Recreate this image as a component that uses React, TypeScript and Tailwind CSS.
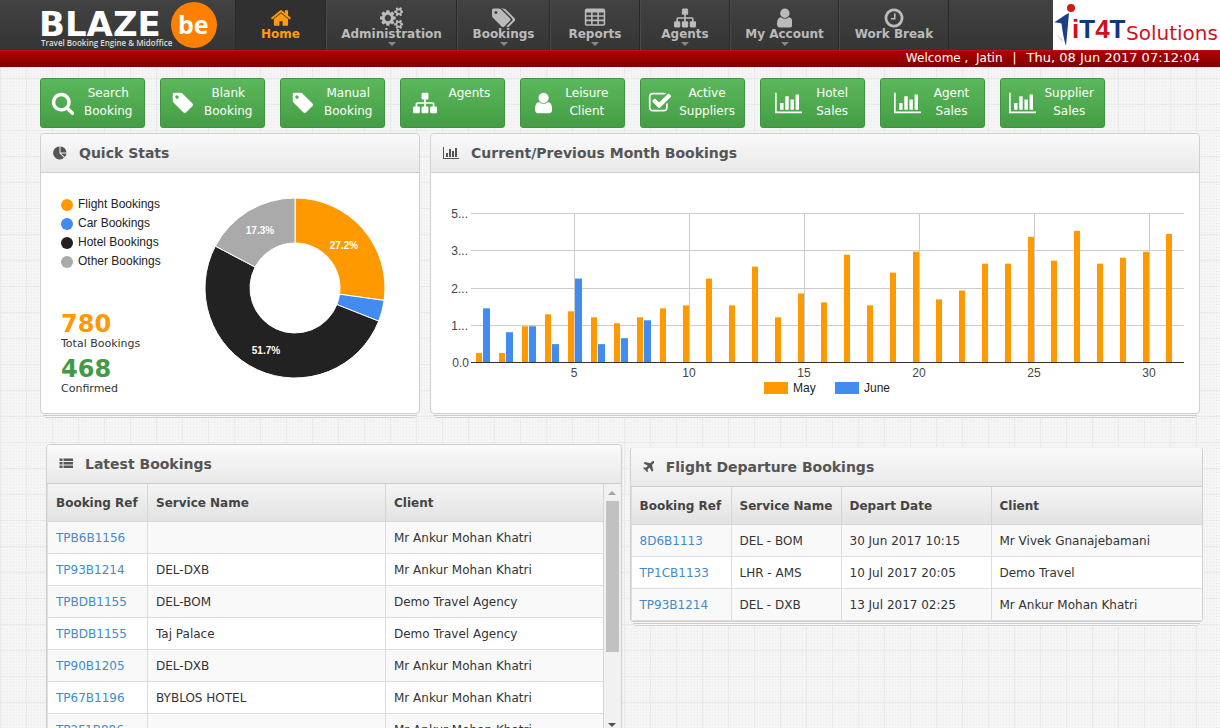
import { type ReactNode } from "react";

const PATHS = {
  home: "M1472 992v480q0 26-19 45t-45 19h-384v-384h-256v384h-384q-26 0-45-19t-19-45v-480q0-1 .5-3t.5-3l575-474 575 474q1 2 1 6zm223-69l-62 74q-8 9-21 11h-3q-13 0-21-7l-692-577-692 577q-12 8-24 7-13-2-21-11l-62-74q-8-10-7-23.5t11-21.5l719-599q32-26 76-26t76 26l244 204v-195q0-14 9-23t23-9h192q14 0 23 9t9 23v408l219 182q10 8 11 21.5t-7 23.5z",
  cogs: "M896 896q0-106-75-181t-181-75-181 75-75 181 75 181 181 75 181-75 75-181zm768 512q0-52-38-90t-90-38-90 38-38 90q0 53 37.5 90.5t90.5 37.5 90.5-37.5 37.5-90.5zm0-1024q0-52-38-90t-90-38-90 38-38 90q0 53 37.5 90.5t90.5 37.5 90.5-37.5 37.5-90.5zm-384 421v185q0 10-7 19.5t-16 10.5l-155 24q-11 35-32 76 34 48 90 115 7 11 7 20 0 12-7 19-23 30-82.5 89.5t-78.5 59.5q-11 0-21-7l-115-90q-37 19-77 31-11 108-23 155-7 24-30 24h-186q-11 0-20-7.5t-10-17.5l-23-153q-34-10-75-31l-118 89q-7 7-20 7-11 0-21-8-144-133-144-160 0-9 7-19 10-14 41-53t47-61q-23-44-35-82l-152-24q-10-1-17-9.5t-7-19.5v-185q0-10 7-19.5t16-10.5l155-24q11-35 32-76-34-48-90-115-7-11-7-20 0-12 7-20 22-30 82-89t79-59q11 0 21 7l115 90q34-18 77-32 11-108 23-154 7-24 30-24h186q11 0 20 7.5t10 17.5l23 153q34 10 75 31l118-89q8-7 20-7 11 0 21 8 144 133 144 160 0 8-7 19-12 16-42 54t-45 60q23 48 34 82l152 23q10 2 17 10.5t7 19.5zm640 533v140q0 16-149 31-12 27-30 52 51 113 51 138 0 4-4 7-122 71-124 71-8 0-46-47t-52-68q-20 2-30 2t-30-2q-14 21-52 68t-46 47q-2 0-124-71-4-3-4-7 0-25 51-138-18-25-30-52-149-15-149-31v-140q0-16 149-31 13-29 30-52-51-113-51-138 0-4 4-7 4-2 35-20t59-34 30-16q8 0 46 46.5t52 67.5q20-2 30-2t30 2q51-71 92-112l6-2q4 0 124 70 4 3 4 7 0 25-51 138 17 23 30 52 149 15 149 31zm0-1024v140q0 16-149 31-12 27-30 52 51 113 51 138 0 4-4 7-122 71-124 71-8 0-46-47t-52-68q-20 2-30 2t-30-2q-14 21-52 68t-46 47q-2 0-124-71-4-3-4-7 0-25 51-138-18-25-30-52-149-15-149-31v-140q0-16 149-31 13-29 30-52-51-113-51-138 0-4 4-7 4-2 35-20t59-34 30-16q8 0 46 46.5t52 67.5q20-2 30-2t30 2q51-71 92-112l6-2q4 0 124 70 4 3 4 7 0 25-51 138 17 23 30 52 149 15 149 31z",
  tag: "M576 448q0-53-37.5-90.5t-90.5-37.5-90.5 37.5-37.5 90.5 37.5 90.5 90.5 37.5 90.5-37.5 37.5-90.5zm1067 576q0 53-37 90l-491 492q-39 37-91 37-53 0-90-37l-715-716q-38-37-64.5-101t-26.5-117v-416q0-52 38-90t90-38h416q53 0 117 26.5t102 64.5l715 714q37 39 37 91z",
  tags: "M448 448q0-53-37.5-90.5t-90.5-37.5-90.5 37.5-37.5 90.5 37.5 90.5 90.5 37.5 90.5-37.5 37.5-90.5zm1067 576q0 53-37 90l-491 492q-39 37-91 37-53 0-90-37l-715-716q-38-37-64.5-101t-26.5-117v-416q0-52 38-90t90-38h416q53 0 117 26.5t102 64.5l715 714q37 39 37 91zm384 0q0 53-37 90l-491 492q-39 37-91 37-36 0-59-14t-53-45l470-470q37-37 37-90 0-52-37-91l-715-714q-38-38-102-64.5t-117-26.5h224q53 0 117 26.5t102 64.5l715 714q37 39 37 91z",
  sitemap: "M1792 1248v320q0 40-28 68t-68 28h-320q-40 0-68-28t-28-68v-320q0-40 28-68t68-28h96v-192h-512v192h96q40 0 68 28t28 68v320q0 40-28 68t-68 28h-320q-40 0-68-28t-28-68v-320q0-40 28-68t68-28h96v-192h-512v192h96q40 0 68 28t28 68v320q0 40-28 68t-68 28h-320q-40 0-68-28t-28-68v-320q0-40 28-68t68-28h96v-192q0-52 38-90t90-38h512v-192h-96q-40 0-68-28t-28-68v-320q0-40 28-68t68-28h320q40 0 68 28t28 68v320q0 40-28 68t-68 28h-96v192h512q52 0 90 38t38 90v192h96q40 0 68 28t28 68z",
  user: "M1536 1399q0 109-62.5 187t-150.5 78h-854q-88 0-150.5-78t-62.5-187q0-85 8.5-160.5t31.5-152 58.5-131 94-89 134.5-34.5q131 128 313 128t313-128q76 0 134.5 34.5t94 89 58.5 131 31.5 152 8.5 160.5zm-256-887q0 159-112.5 271.5t-271.5 112.5-271.5-112.5-112.5-271.5 112.5-271.5 271.5-112.5 271.5 112.5 112.5 271.5z",
  clock: "M1024 544v448q0 14-9 23t-23 9h-320q-14 0-23-9t-9-23v-64q0-14 9-23t23-9h224v-352q0-14 9-23t23-9h64q14 0 23 9t9 23zm416 352q0-148-73-273t-198-198-273-73-273 73-198 198-73 273 73 273 198 198 273 73 273-73 198-198 73-273zm224 0q0 209-103 385.5t-279.5 279.5-385.5 103-385.5-103-279.5-279.5-103-385.5 103-385.5 279.5-279.5 385.5-103 385.5 103 279.5 279.5 103 385.5z",
  table: "M224 128h1344q66 0 113 47t47 113v1088q0 66-47 113t-113 47h-1344q-66 0-113-47t-47-113v-1088q0-66 47-113t113-47zm-32 320v224h384v-224zm512 0v224h384v-224zm512 0v224h384v-224zm-1024 352v224h384v-224zm512 0v224h384v-224zm512 0v224h384v-224zm-1024 352v256h384v-256zm512 0v256h384v-256zm512 0v256h384v-256z",
  search: "M1216 832q0-185-131.5-316.5t-316.5-131.5-316.5 131.5-131.5 316.5 131.5 316.5 316.5 131.5 316.5-131.5 131.5-316.5zm512 832q0 52-38 90t-90 38q-54 0-90-38l-343-342q-179 124-399 124-143 0-273.5-55.5t-225-150-150-225-55.5-273.5 55.5-273.5 150-225 225-150 273.5-55.5 273.5 55.5 225 150 150 225 55.5 273.5q0 220-124 399l343 343q37 37 37 90z",
  check: "M1472 930v318q0 119-84.5 203.5t-203.5 84.5h-832q-119 0-203.5-84.5t-84.5-203.5v-832q0-119 84.5-203.5t203.5-84.5h832q63 0 117 25 15 7 18 23 3 17-9 29l-49 49q-10 10-23 10-3 0-9-2-23-6-45-6h-832q-66 0-113 47t-47 113v832q0 66 47 113t113 47h832q66 0 113-47t47-113v-254q0-13 9-22l64-64q10-10 23-10 6 0 12 3 20 8 20 29zm231-489l-814 814q-24 24-57 24t-57-24l-430-430q-24-24-24-57t24-57l110-110q24-24 57-24t57 24l263 263 647-647q24-24 57-24t57 24l110 110q24 24 24 57t-24 57z",
  chart: "M640 896v512h-256v-512h256zm384-512v1024h-256v-1024h256zm1024 1152v128h-2048v-1536h128v1408h1920zm-640-896v768h-256v-768h256zm384-384v1152h-256v-1152h256z",
  list: "M64 192h384v320h-384zm512 0h1216v320h-1216zm-512 448h384v320h-384zm512 0h1216v320h-1216zm-512 448h384v320h-384zm512 0h1216v320h-1216z",
  plane: "M1568 160q44 52 12 148t-108 172l-161 161 160 696q5 19-12 33l-128 96q-7 6-19 6-4 0-7-1-15-3-21-14l-279-508-259 259 53 194q5 17-8 31l-96 96q-9 9-23 9h-2q-15-2-24-13l-189-252-252-189q-11-7-13-23-1-13 9-25l96-97q9-9 23-9 6 0 8 1l194 53 259-259-508-279q-14-8-17-24-2-16 9-27l128-128q14-13 30-8l665 159 160-160q76-76 172-108t148 12z",
  pie: "M830 60A830 830 0 1 0 1400 1510L830 930ZM960 60A830 830 0 0 1 1730 830H960ZM1730 960A830 830 0 0 1 1500 1420L1040 960Z",
};

type IconName = keyof typeof PATHS;

// glyphs that are wider or narrower than the usual square
const BOXES: Partial<Record<IconName, string>> = {
  cogs: "0 0 1920 1792",
  tags: "0 0 1920 1792",
  chart: "0 0 2048 1792",
  user: "256 0 1280 1792",
  plane: "160 0 1440 1792",
};

function Icon({ name, className }: { name: IconName; className: string }) {
  return (
    <svg
      viewBox={BOXES[name] ?? "0 0 1792 1792"}
      className={`w-auto shrink-0 fill-current ${className}`}
      aria-hidden="true"
    >
      <path fillRule="evenodd" d={PATHS[name]} />
    </svg>
  );
}

const nav: { label: string; icon: IconName; width: string; menu?: boolean }[] = [
  { label: "Home", icon: "home", width: "w-[90px]" },
  { label: "Administration", icon: "cogs", width: "w-[131px]", menu: true },
  { label: "Bookings", icon: "tags", width: "w-[93px]", menu: true },
  { label: "Reports", icon: "table", width: "w-[90px]", menu: true },
  { label: "Agents", icon: "sitemap", width: "w-[90px]", menu: true },
  { label: "My Account", icon: "user", width: "w-[109px]", menu: true },
  { label: "Work Break", icon: "clock", width: "w-[110px]" },
];

const actions: { lines: string[]; icon: IconName }[] = [
  { lines: ["Search", "Booking"], icon: "search" },
  { lines: ["Blank", "Booking"], icon: "tag" },
  { lines: ["Manual", "Booking"], icon: "tag" },
  { lines: ["Agents"], icon: "sitemap" },
  { lines: ["Leisure", "Client"], icon: "user" },
  { lines: ["Active", "Suppliers"], icon: "check" },
  { lines: ["Hotel", "Sales"], icon: "chart" },
  { lines: ["Agent", "Sales"], icon: "chart" },
  { lines: ["Supplier", "Sales"], icon: "chart" },
];

const slices = [
  { label: "Flight Bookings", value: 27.2, color: "#ff9900", dot: "bg-[#ff9900]" },
  { label: "Car Bookings", value: 3.8, color: "#428bf1", dot: "bg-[#428bf1]" },
  { label: "Hotel Bookings", value: 51.7, color: "#222222", dot: "bg-[#222222]" },
  { label: "Other Bookings", value: 17.3, color: "#aaaaaa", dot: "bg-[#aaaaaa]" },
];

const may = [
  3, 3, 12, 16, 17, 15, 13, 15, 18, 19, 28, 19, 32, 15, 23, 20, 36, 19, 30, 37,
  21, 24, 33, 33, 42, 34, 44, 33, 35, 37, 43,
];
const june = [18, 10, 12, 6, 28, 6, 8, 14];

const latest = [
  ["TPB6B1156", "", "Mr Ankur Mohan Khatri"],
  ["TP93B1214", "DEL-DXB", "Mr Ankur Mohan Khatri"],
  ["TPBDB1155", "DEL-BOM", "Demo Travel Agency"],
  ["TPBDB1155", "Taj Palace", "Demo Travel Agency"],
  ["TP90B1205", "DEL-DXB", "Mr Ankur Mohan Khatri"],
  ["TP67B1196", "BYBLOS HOTEL", "Mr Ankur Mohan Khatri"],
  ["TP2F1B886", "", "Mr Ankur Mohan Khatri"],
];

const departures = [
  ["8D6B1113", "DEL - BOM", "30 Jun 2017 10:15", "Mr Vivek Gnanajebamani"],
  ["TP1CB1133", "LHR - AMS", "10 Jul 2017 20:05", "Demo Travel"],
  ["TP93B1214", "DEL - DXB", "13 Jul 2017 02:25", "Mr Ankur Mohan Khatri"],
];

function BlazeLogo() {
  return (
    <svg viewBox="0 0 180 50" className="h-[50px] w-[180px]" role="img" aria-label="Blaze be">
      <text x="-1" y="36" fill="#fff" className="font-['DejaVu_Sans'] text-[34px] font-bold">
        BLAZE
      </text>
      <text x="1" y="46" fill="#ddd" className="font-['Open_Sans'] text-[8px] font-semibold">
        Travel Booking Engine &amp; Midoffice
      </text>
      <circle cx="154" cy="25" r="23" fill="#ff8000" />
      <text x="138" y="34" fill="#fff" className="font-['Open_Sans'] text-[25px] font-bold">
        be
      </text>
    </svg>
  );
}

function PartnerLogo() {
  return (
    <svg viewBox="0 0 167 50" className="h-[50px] w-[167px] bg-white" role="img" aria-label="iT4T Solutions">
      <path d="M1 22.500C6 19 11 15.500 16 13L13 46C11 40 9.500 32 8.500 23.500C6 22.500 3 22.500 1 22.500Z" fill="#1c3f86" />
      <path d="M2 34L10 42L9 39Z" fill="#ccc" />
      <circle cx="18" cy="8" r="4" fill="#d01818" />
      <text x="19" y="38" fill="#14367c" className="font-['Liberation_Sans'] text-[26px] font-bold">
        <tspan fill="#d0101c">i</tspan>T<tspan fill="#d0101c">4</tspan>T
      </text>
      <text x="73" y="40" fill="#d0101c" className="font-['DejaVu_Sans'] text-[20px]">
        Solutions
      </text>
    </svg>
  );
}

function Panel({ title, icon, className, children }: {
  title: string;
  icon: IconName;
  className: string;
  children: ReactNode;
}) {
  return (
    <section
      className={`rounded-sm border border-[#cfcfcf] bg-white shadow-[0_4px_0_-3px_#f7f7f7,0_5px_0_-3px_#cccccc,0_8px_0_-5px_#f7f7f7,0_9px_0_-5px_#d2d2d2] ${className}`}
    >
      <header className="flex h-[39px] items-center gap-3 rounded-t-sm border-b border-[#cccccc] bg-linear-to-b from-[#fafafa] to-[#e9e9e9] px-3 text-[#555555]">
        <Icon name={icon} className="h-[14px]" />
        <h2 className="text-sm font-bold">{title}</h2>
      </header>
      {children}
    </section>
  );
}

function DonutChart() {
  const point = (pct: number, r: number) => {
    const a = (pct / 100) * 2 * Math.PI;
    return `${91 + r * Math.sin(a)} ${91 - r * Math.cos(a)}`;
  };
  let start = 0;
  return (
    <svg viewBox="0 0 182 182" className="h-[182px] w-[182px]" role="img" aria-label="Bookings by type">
      {slices.map((s) => {
        const from = start;
        const to = (start += s.value);
        const large = s.value > 50 ? 1 : 0;
        return (
          <path
            key={s.label}
            d={`M${point(from, 90)}A90 90 0 ${large} 1 ${point(to, 90)}L${point(to, 45)}A45 45 0 ${large} 0 ${point(from, 45)}Z`}
            fill={s.color}
            stroke="#fff"
          />
        );
      })}
      <g fill="#fff" textAnchor="middle" className="font-['Liberation_Sans'] text-[10px] font-bold">
        <text x="140" y="52">27.2%</text>
        <text x="62" y="157">51.7%</text>
        <text x="56" y="37">17.3%</text>
      </g>
    </svg>
  );
}

function BarChart() {
  const center = (day: number) => 28 + day * 23;
  return (
    <svg
      viewBox="0 0 768 240"
      className="w-full font-['Liberation_Sans'] text-[12px]"
      role="img"
      aria-label="Bookings per day, May and June"
    >
      <g stroke="#cccccc">
        {[40, 77, 115, 152].map((y) => (
          <line key={y} x1="40" x2="753" y1={y + 0.5} y2={y + 0.5} />
        ))}
        {[5, 10, 15, 20, 25, 30].map((d) => (
          <line key={d} x1={center(d) + 0.5} x2={center(d) + 0.5} y1="40" y2="189" />
        ))}
      </g>
      {may.map((v, i) => (
        <rect key={i} x={center(i + 1) - 6} y={189 - v * 2.98} width="6" height={v * 2.98} fill="#ff9900" />
      ))}
      {june.map((v, i) => (
        <rect key={i} x={center(i + 1) + 1} y={189 - v * 2.98} width="7" height={v * 2.98} fill="#428bf1" />
      ))}
      <line x1="40" x2="753" y1="189.500" y2="189.500" stroke="#333333" />
      <g fill="#444444" textAnchor="end">
        <text x="37" y="45">5...</text>
        <text x="37" y="82">3...</text>
        <text x="37" y="120">2...</text>
        <text x="37" y="157">1...</text>
        <text x="38" y="194">0.0</text>
      </g>
      <g fill="#444444" textAnchor="middle">
        {[5, 10, 15, 20, 25, 30].map((d) => (
          <text key={d} x={center(d)} y="204">{d}</text>
        ))}
      </g>
      <rect x="333" y="209" width="24" height="12" fill="#ff9900" />
      <text x="362" y="219" fill="#222222">May</text>
      <rect x="404" y="209" width="24" height="12" fill="#428bf1" />
      <text x="433" y="219" fill="#222222">June</text>
    </svg>
  );
}

function DataTable({ headings, widths, rows }: {
  headings: string[];
  widths: string[];
  rows: string[][];
}) {
  return (
    <table className="w-full table-fixed border-separate border-spacing-0 border-l border-[#dddddd] text-left text-xs text-[#333333]">
      <thead>
        <tr className="h-[38px] text-[#444444]">
          {headings.map((h, i) => (
            <th
              key={h}
              scope="col"
              className={`border-r border-b border-[#d6d6d6] bg-linear-to-b from-[#f5f5f5] to-[#e2e2e2] px-2 font-bold whitespace-nowrap last:border-r-0 ${widths[i]}`}
            >
              {h}
            </th>
          ))}
        </tr>
      </thead>
      <tbody>
        {rows.map((row, r) => (
          <tr key={r} className="h-8 odd:bg-[#f9f9f9] even:bg-white">
            {row.map((cell, c) => (
              <td key={c} className="border-r border-b border-[#dddddd] px-2 whitespace-nowrap last:border-r-0">
                {c === 0 ? (
                  <a href="#" className="text-[#428bca]">{cell}</a>
                ) : (
                  cell
                )}
              </td>
            ))}
          </tr>
        ))}
      </tbody>
    </table>
  );
}

export default function App() {
  return (
    <div className="h-screen overflow-hidden bg-[#f5f5f5] bg-[linear-gradient(#e9e9e9_1px,transparent_1px),linear-gradient(90deg,#e9e9e9_1px,transparent_1px),radial-gradient(#eaeaea_1px,transparent_1px)] bg-size-[26px_26px,26px_26px,3px_3px] font-['DejaVu_Sans',sans-serif] text-xs text-[#333333]">
      <header>
        <div className="flex h-[50px] bg-linear-to-b from-[#424242] to-[#353535]">
          <a href="#" className="w-[235px] shrink-0 pl-10">
            <BlazeLogo />
          </a>
          <nav className="flex border-l border-[#2a2a2a]" aria-label="Main navigation">
            {nav.map((item, i) => (
              <a
                key={item.label}
                href="#"
                className={`relative flex shrink-0 flex-col items-center border-r border-r-[#282828] pt-[7px] font-bold ${item.width} ${
                  i === 0 ? "bg-[#303030] text-[#ff9c0a]" : "border-l border-l-[#4b4b4b] text-[#bbbbbb]"
                }`}
              >
                <Icon name={item.icon} className="h-[22px]" />
                <span className="-mt-0.5 leading-[14px] whitespace-nowrap">{item.label}</span>
                {item.menu && (
                  <span className="absolute bottom-1 border-x-4 border-t-4 border-x-transparent border-t-[#888888]" />
                )}
              </a>
            ))}
          </nav>
          <a href="#" className="ml-auto">
            <PartnerLogo />
          </a>
        </div>
        <div className="flex h-[17px] items-center justify-end border-t border-[#c00f0f] bg-linear-to-b from-[#b00000] to-[#800000] pr-5 pb-0.5 whitespace-pre text-white">
          <span>Welcome ,  Jatin</span>
          <span className="px-[10px]">|</span>
          <span className="text-[13px]">Thu, 08 Jun 2017 07:12:04</span>
        </div>
      </header>

      <main>
        <div className="flex gap-[15px] pt-[11px] pl-10">
          {actions.map((a) => (
            <button
              key={a.lines.join(" ")}
              type="button"
              className="flex h-[50px] w-[105px] items-center justify-evenly rounded-[3px] border border-[#3e9440] bg-linear-to-b from-[#5cb85c] to-[#449d44] pr-0.5 text-white"
            >
              <Icon name={a.icon} className="h-6" />
              <span className="h-[38px] leading-[18px]">
                {a.lines.map((line) => (
                  <span key={line} className="block">{line}</span>
                ))}
              </span>
            </button>
          ))}
        </div>

        <div className="flex items-stretch gap-[10px] pt-[5px] pr-5 pl-10">
          <Panel title="Quick Stats" icon="pie" className="w-[380px] shrink-0">
            <div className="flex pl-5">
              <div className="w-[143px] pt-[22px]">
                <ul className="font-['Liberation_Sans'] leading-[19px] text-[#222222]">
                  {slices.map((s) => (
                    <li key={s.label} className="flex items-center gap-[5px]">
                      <span className={`size-3 rounded-full ${s.dot}`} />
                      {s.label}
                    </li>
                  ))}
                </ul>
                <dl className="mt-[41px] flex flex-col gap-[5px] text-[11px] leading-4">
                  <div className="flex flex-col-reverse">
                    <dt>Total Bookings</dt>
                    <dd className="text-2xl leading-6 font-bold text-[#ff9900]">780</dd>
                  </div>
                  <div className="flex flex-col-reverse">
                    <dt>Confirmed</dt>
                    <dd className="text-2xl leading-6 font-bold text-[#449944]">468</dd>
                  </div>
                </dl>
              </div>
              <div className="pt-6">
                <DonutChart />
              </div>
            </div>
          </Panel>
          <Panel title="Current/Previous Month Bookings" icon="chart" className="min-w-0 flex-1">
            <BarChart />
          </Panel>
        </div>

        <div className="flex items-start gap-2 pt-[30px] pr-[17px] pl-[46px]">
          <Panel title="Latest Bookings" icon="list" className="min-w-0 flex-1">
            <div className="flex h-[249px] overflow-hidden">
              <div className="flex-1">
                <DataTable
                  headings={["Booking Ref", "Service Name", "Client"]}
                  widths={["w-[100px]", "w-[238px]", ""]}
                  rows={latest}
                />
              </div>
              <div className="flex w-[18px] flex-col items-center border-l border-[#d4d4d4] bg-[#f1f1f1]" aria-hidden="true">
                <div className="flex h-[17px] items-center">
                  <span className="border-x-4 border-b-4 border-x-transparent border-b-[#a3a3a3]" />
                </div>
                <div className="w-[13px] flex-1">
                  <div className="h-[151px] bg-[#c1c1c1]" />
                </div>
                <div className="flex h-[17px] items-center">
                  <span className="border-x-4 border-t-4 border-x-transparent border-t-[#505050]" />
                </div>
              </div>
            </div>
          </Panel>
          <div className="min-w-0 flex-1 pt-[3px]">
            <Panel title="Flight Departure Bookings" icon="plane" className="border-t-[#f0f0f0]">
              <DataTable
                headings={["Booking Ref", "Service Name", "Depart Date", "Client"]}
                widths={["w-[100px]", "w-[110px]", "w-[150px]", ""]}
                rows={departures}
              />
            </Panel>
          </div>
        </div>
      </main>
    </div>
  );
}
